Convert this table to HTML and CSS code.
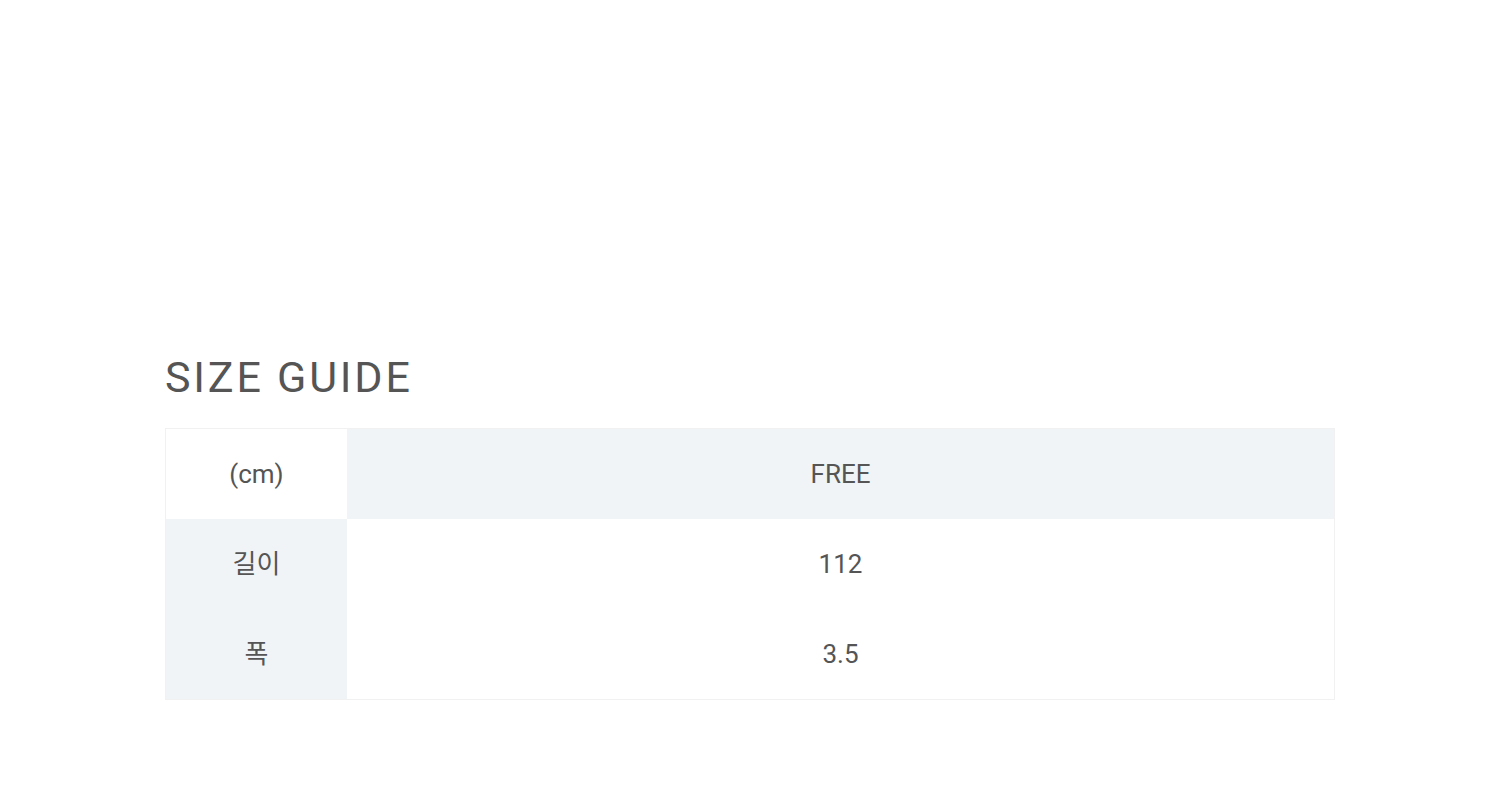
FILE: index.html
```html
<!DOCTYPE html>
<html lang="ko">
<head>
<meta charset="utf-8">
<link rel="stylesheet" href="styles.css">
</head>
<body>
<section class="guide">
  <h2 class="title">SIZE GUIDE</h2>
  <table class="size-table">
    <tr>
      <th class="label plain">(cm)</th>
      <th class="value shaded">FREE</th>
    </tr>
    <tr>
      <th class="label shaded ko">길이</th>
      <td class="value">112</td>
    </tr>
    <tr>
      <th class="label shaded ko">폭</th>
      <td class="value">3.5</td>
    </tr>
  </table>
</section>
</body>
</html>
```
FILE: styles.css
```css
html, body {
  margin: 0;
  padding: 0;
  background: #ffffff;
}
body {
  font-family: Roboto, "Noto Sans CJK KR", sans-serif;
  color: #555555;
}
.guide {
  width: 1170px;
  margin: 0 auto;
  padding-top: 348px;
}
.title {
  margin: 0 0 21px 0;
  font-size: 43px;
  font-weight: 400;
  letter-spacing: 2.8px;
  line-height: 59px;
  color: #555555;
}
.size-table {
  width: 100%;
  border-collapse: collapse;
  border: 1px solid #f1f1f1;
}
.size-table th,
.size-table td {
  height: 90px;
  padding: 0;
  text-align: center;
  vertical-align: middle;
  font-weight: 400;
  font-size: 26px;
  color: #555555;
}
.size-table th.ko {
  height: 84px;
  padding-bottom: 6px;
}
.label {
  width: 181px;
}
.shaded {
  background: #f0f4f7;
}
.plain {
  background: #ffffff;
}
```
